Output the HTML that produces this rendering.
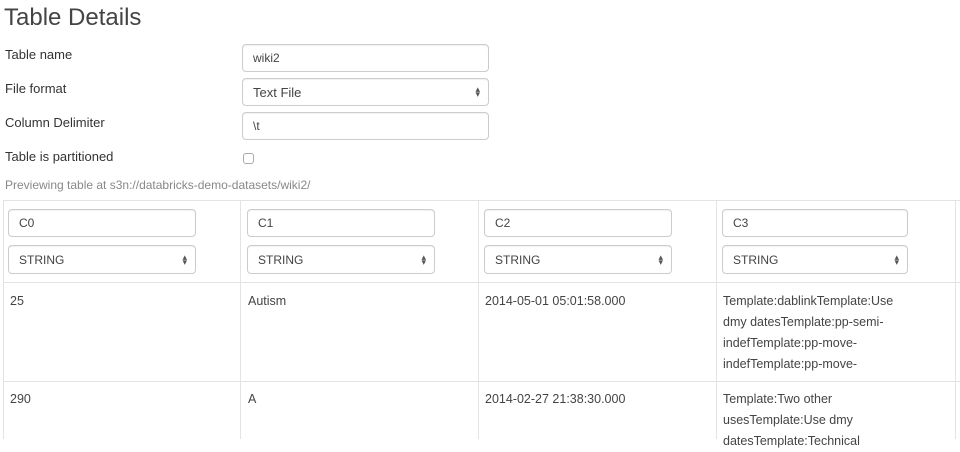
<!DOCTYPE html><html><head><style>
body{margin:0;width:960px;height:439px;overflow:hidden;background:#fff;font-family:"Liberation Sans",sans-serif;color:#333;font-size:13px;position:relative}
.a{position:absolute}
.inp{position:absolute;border:1px solid #ccc;border-radius:4px;background:#fff;box-sizing:border-box;padding-left:10px;font-size:12px;color:#444;display:flex;align-items:center;box-shadow:inset 0 1px 1px rgba(0,0,0,.06)}
.arr{position:absolute;right:8px;font-size:9px;line-height:5px;color:#555}
.lbl{position:absolute;left:5px;font-size:13px;color:#333}
.vl{position:absolute;top:200px;width:1px;height:239px;background:#e3e3e3}
.hl{position:absolute;left:3px;width:957px;height:1px;background:#e3e3e3}
.cell{position:absolute;font-size:12.5px;line-height:21px;color:#444;white-space:nowrap}
</style></head><body>
<div class="a" style="left:4px;top:4px;font-size:24px;color:#444">Table Details</div>
<div class="lbl" style="top:47px">Table name</div>
<div class="lbl" style="top:81px">File format</div>
<div class="lbl" style="top:115px">Column Delimiter</div>
<div class="lbl" style="top:149px">Table is partitioned</div>
<div class="inp" style="left:242px;top:44px;width:247px;height:28px">wiki2</div>
<div class="inp" style="left:242px;top:78px;width:247px;height:28px;font-size:13px">Text File<span class="arr">▴<br>▾</span></div>
<div class="inp" style="left:242px;top:112px;width:247px;height:28px">\t</div>
<div class="a" style="left:243px;top:153px;width:11px;height:11px;border:1px solid #aaa;border-radius:3px;box-sizing:border-box"></div>
<div class="a" style="left:5px;top:178px;font-size:12px;color:#888">Previewing table at s3n://databricks-demo-datasets/wiki2/</div>
<div class="hl" style="top:200px"></div>
<div class="hl" style="top:282px"></div>
<div class="hl" style="top:381px"></div>
<div class="vl" style="left:3px"></div><div class="vl" style="left:240px"></div><div class="vl" style="left:478px"></div><div class="vl" style="left:716px"></div><div class="vl" style="left:955px"></div>
<div class="inp" style="left:8px;top:209px;width:188px;height:28px">C0</div>
<div class="inp" style="left:247px;top:209px;width:188px;height:28px">C1</div>
<div class="inp" style="left:484px;top:209px;width:188px;height:28px">C2</div>
<div class="inp" style="left:722px;top:209px;width:186px;height:28px">C3</div>
<div class="inp" style="left:8px;top:245px;width:188px;height:29px">STRING<span class="arr">▴<br>▾</span></div>
<div class="inp" style="left:247px;top:245px;width:188px;height:29px">STRING<span class="arr">▴<br>▾</span></div>
<div class="inp" style="left:484px;top:245px;width:188px;height:29px">STRING<span class="arr">▴<br>▾</span></div>
<div class="inp" style="left:722px;top:245px;width:186px;height:29px">STRING<span class="arr">▴<br>▾</span></div>
<div class="cell" style="left:10px;top:291px">25</div>
<div class="cell" style="left:248px;top:291px">Autism</div>
<div class="cell" style="left:485px;top:291px">2014-05-01 05:01:58.000</div>
<div class="cell" style="left:723px;top:291px;height:86px;overflow:hidden">Template:dablinkTemplate:Use<br>dmy datesTemplate:pp-semi-<br>indefTemplate:pp-move-<br>indefTemplate:pp-move-</div>
<div class="cell" style="left:10px;top:389px">290</div>
<div class="cell" style="left:248px;top:389px">A</div>
<div class="cell" style="left:485px;top:389px">2014-02-27 21:38:30.000</div>
<div class="cell" style="left:723px;top:389px">Template:Two other<br>usesTemplate:Use dmy<br>datesTemplate:Technical</div>
</body></html>
